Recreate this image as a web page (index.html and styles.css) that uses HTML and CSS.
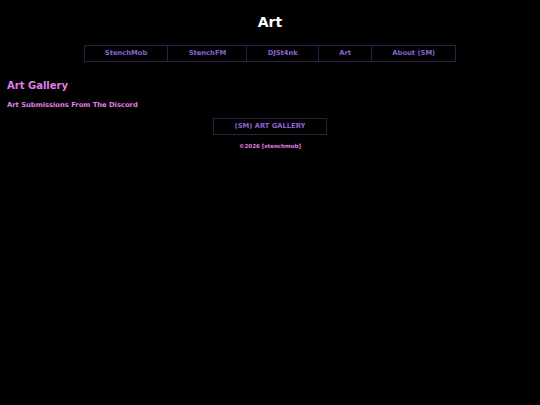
FILE: index.html
```html
<!DOCTYPE html>
<html>
<head>
<meta charset="utf-8">
<link rel="stylesheet" href="styles.css">
</head>
<body>
<header class="header">
  <h1 class="title">Art</h1>
  <nav class="nav">
    <a class="nav-item" href="#">StenchMob</a>
    <a class="nav-item" href="#">StenchFM</a>
    <a class="nav-item" href="#">DJSt4nk</a>
    <a class="nav-item" href="#">Art</a>
    <a class="nav-item" href="#">About (SM)</a>
  </nav>
</header>
<main class="main">
  <h2 class="heading">Art Gallery</h2>
  <p class="sub">Art Submissions From The Discord</p>
  <div class="center">
    <a class="button" href="#">(SM) ART GALLERY</a>
    <p class="copy">©2026 [stenchmob]</p>
  </div>
</main>
</body>
</html>
```
FILE: styles.css
```css
html, body {
  margin: 0;
  padding: 0;
  background: #000;
}
body {
  font-family: "DejaVu Sans", sans-serif;
  font-weight: bold;
  color: #fff;
}
.header {
  display: flex;
  flex-direction: column;
  align-items: center;
  padding-top: 14px;
}
.title {
  margin: 0;
  font-size: 14px;
  line-height: 16px;
  color: #fff;
}
.nav {
  display: flex;
  margin-top: 15px;
  border: 1px solid #2a2046;
}
.nav-item {
  display: block;
  font-size: 6.75px;
  line-height: 15px;
  padding: 0 20.2px;
  color: #8a62d4;
  text-decoration: none;
  border-left: 1px solid #2a2046;
}
.nav-item:first-child {
  border-left: none;
}
.main {
  padding: 0 7px;
}
.heading {
  margin: 17px 0 0;
  font-size: 10px;
  line-height: 13px;
  color: #e27ee6;
}
.sub {
  margin: 8px 0 0;
  font-size: 6.75px;
  line-height: 10px;
  color: #e27ee6;
}
.center {
  display: flex;
  flex-direction: column;
  align-items: center;
}
.button {
  margin-top: 8px;
  display: block;
  font-size: 6.75px;
  line-height: 15px;
  padding: 0 20.5px;
  border: 1px solid #2a2046;
  color: #8a62d4;
  text-decoration: none;
}
.copy {
  margin: 6px 0 0;
  font-size: 5.5px;
  line-height: 10px;
  color: #e27ee6;
}
```
